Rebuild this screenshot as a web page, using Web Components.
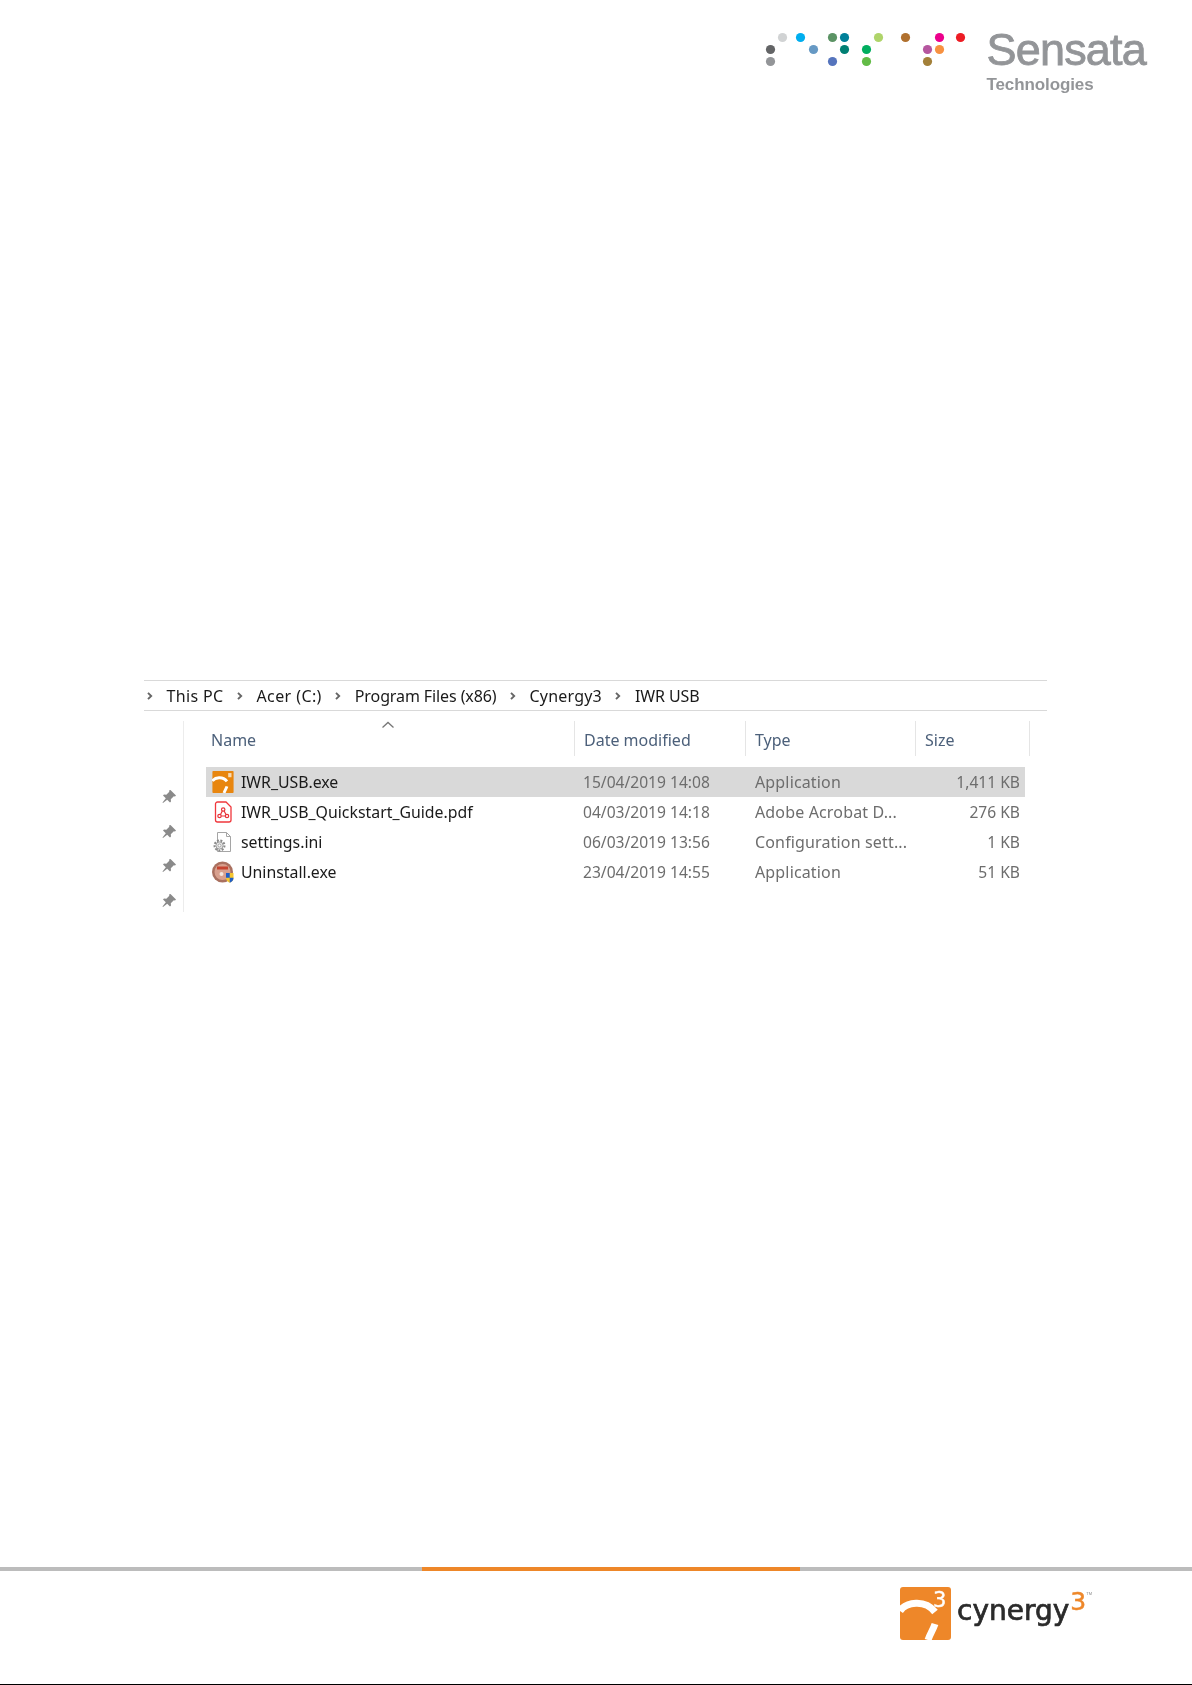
<!DOCTYPE html>
<html>
<head>
<meta charset="utf-8">
<title>IWR USB</title>
<style>
html, body { margin: 0; background: #fff; }
body { width: 1192px; height: 1685px; overflow: hidden; display: flex; flex-direction: column; }
file-window { margin-top: 570px; }
page-footer { margin-top: auto; }
</style>
</head>
<body>
<page-header></page-header>
<file-window>
  <path-bar slot="path" parts="This PC|Acer (C:)|Program Files (x86)|Cynergy3|IWR USB" tracks=".35 .4 -.1 .2 -.1"></path-bar>
  <file-row slot="rows" selected name="IWR_USB.exe" date="15/04/2019 14:08" type="Application" size="1,411 KB" icon="c3"></file-row>
  <file-row slot="rows" name="IWR_USB_Quickstart_Guide.pdf" date="04/03/2019 14:18" type="Adobe Acrobat D..." size="276 KB" icon="pdf"></file-row>
  <file-row slot="rows" name="settings.ini" date="06/03/2019 13:56" type="Configuration sett..." size="1 KB" icon="ini"></file-row>
  <file-row slot="rows" name="Uninstall.exe" date="23/04/2019 14:55" type="Application" size="51 KB" icon="setup"></file-row>
</file-window>
<page-footer></page-footer>

<script>
// sensata logo, dots are [x, y, colour] inside the svg
const DOTS = [
  [33,12,'#d1d3d4'],[51,12,'#00aeef'],[21,24,'#636466'],[21,36,'#939598'],[64,24,'#6699c4'],
  [83,12,'#5b9364'],[95,12,'#008099'],[95,24,'#007f73'],[83,36,'#5574bd'],[117,24,'#00ae5f'],
  [117,36,'#62bb46'],[129,12,'#afd46a'],[156,12,'#b0702e'],[190,12,'#ec008c'],[211,12,'#ed1c24'],
  [178,24,'#b5569f'],[190,24,'#f79140'],[178,36,'#a38039']
];

// the two white strokes of the c3 mark, in the 51x53 box of the footer logo
const C3_MARK = `<g fill="none" stroke="#fff" stroke-width="7">
  <path d="M0 24C6 15 25 12 35 25"/><path d="M35 37C33 43 30 47 28 53"/></g>`;

class PageHeader extends HTMLElement {
  constructor() {
    super();
    const circles = DOTS.map(d => `<circle cx="${d[0]}" cy="${d[1]}" r="4.6" fill="${d[2]}"/>`).join('');
    this.attachShadow({ mode: 'open' }).innerHTML = `
<style>
:host { display: flex; justify-content: flex-end; height: 110px; padding: 25px 46px 0 0; box-sizing: border-box; }
.logo { display: flex; gap: 11px; filter: blur(.4px); }
svg { width: 225px; height: 50px; display: block; }
.words { display: flex; flex-direction: column; font-family: "Liberation Sans", sans-serif; color: #939598; }
.big { font-size: 45px; line-height: 50px; letter-spacing: -.8px; -webkit-text-stroke: .8px #939598; }
.small { font-size: 17px; line-height: 20px; font-weight: bold; letter-spacing: -.1px; }
</style>
<div class="logo">
  <svg viewBox="0.5 -0.5 225 50">${circles}</svg>
  <div class="words"><span class="big">Sensata</span><span class="small">Technologies</span></div>
</div>`;
  }
}

class PathBar extends HTMLElement {
  constructor() {
    super();
    const chev = '<svg width="8" height="10" viewBox="0 0 8 10"><path d="M2 1.800 5.200 5 2 8.200" fill="none" stroke="#666" stroke-width="1.900"/></svg>';
    const tracks = this.getAttribute('tracks').split(' ');
    const items = this.getAttribute('parts').split('|')
      .map((p, i) => `${chev}<span style="letter-spacing:${tracks[i]}px">${p}</span>`).join('');
    this.attachShadow({ mode: 'open' }).innerHTML = `
<style>
:host { display: block; }
.bar { display: flex; align-items: center; height: 29px; border-top: 1px solid #d9d9d9; border-bottom: 1px solid #d9d9d9; padding-left: 2px; color: #1a1a1a; font-size: 16px; }
svg { flex: none; margin-right: 12.500px; }
span { margin-right: 12.500px; }
</style>
<div class="bar">${items}</div>`;
  }
}

const ICONS = {
  c3: `<svg viewBox="0 0 51 53"><rect width="51" height="53" rx="2" fill="#e8860f"/>${C3_MARK}<path d="M38 5h8v10h-8z" fill="#f9dcb4"/></svg>`,
  pdf: `<svg viewBox="0 0 22 22"><path d="M3.500 3a2 2 0 0 1 2-2H14l5 5v13a2 2 0 0 1-2 2H5.500a2 2 0 0 1-2-2z" fill="#fff" stroke="#f0373c" stroke-width="1.300"/><g fill="none" stroke="#e8333a" stroke-width="1.200"><circle cx="11.200" cy="8.500" r="1.700"/><circle cx="7.500" cy="15" r="1.700"/><circle cx="15" cy="15" r="1.700"/><path d="M10.300 10 8.500 13.500M12.100 10 14 13.500M9.200 15h4.100"/></g></svg>`,
  ini: `<svg viewBox="0 0 22 22"><path d="M5.500 20.500V1.500H14.500L18.500 5.500V20.500z" fill="#fff" stroke="#a5a5a5"/><path d="M14.500 1.500v4h4" fill="none" stroke="#a5a5a5"/><circle cx="7.500" cy="14.500" r="5" fill="none" stroke="#8a8a8a" stroke-width="2" stroke-dasharray="2 1.400"/><circle cx="7.500" cy="14.500" r="3.600" fill="#e8e8e8" stroke="#8a8a8a" stroke-width=".8"/><circle cx="7.500" cy="14.500" r="1.500" fill="#fff" stroke="#8a8a8a" stroke-width=".7"/></svg>`,
  setup: `<svg viewBox="0 0 22 22"><circle cx="10.500" cy="11" r="10.500" fill="#a9705f"/><circle cx="10.500" cy="11" r="8" fill="#d8a08e"/><path d="M5 5.500h11v3H5z" fill="#c6432f"/><circle cx="9.500" cy="13" r="2" fill="#f4e8e0"/><path d="M14 12h7.500v5c0 2.500-1.800 4-3.750 4.800C15.800 21 14 19.500 14 17z" fill="#f6c52e"/><path d="M14 12h3.750v4.800H14zM17.750 16.800h3.750v.2c0 2.500-1.800 4-3.750 4.800z" fill="#1f5fc7"/></svg>`
};

class FileRow extends HTMLElement {
  constructor() {
    super();
    const g = n => this.getAttribute(n);
    this.attachShadow({ mode: 'open' }).innerHTML = `
<style>
:host { display: grid; grid-template-columns: 377px 172px 135px 1fr; align-items: center; height: 30px; white-space: nowrap; }
:host([selected]) { background: #d9d9d9; }
.name { display: flex; align-items: center; color: #1a1a1a; padding-left: 6px; gap: 7px; font-size: 15.850px; }
.name svg { width: 22px; height: 22px; flex: none; }
.grey { color: #6d6d6d; }
.date { font-size: 15.600px; }
.type { letter-spacing: .15px; }
.size { text-align: right; padding-right: 5px; font-size: 15.600px; }
</style>
<div class="name">${ICONS[g('icon')]}<span>${g('name')}</span></div>
<div class="grey date">${g('date')}</div>
<div class="grey type">${g('type')}</div>
<div class="grey size">${g('size')}</div>`;
  }
}

class FileWindow extends HTMLElement {
  constructor() {
    super();
    const pin = '<svg width="16" height="16" viewBox="0 0 16 16"><path d="M9.500 1 15 6.500l-1 1-1.200-.3-3 3 .2 2.300-1 1-2.800-2.800L2 14l-.5-.5 3.300-4.200L2 6.500l1-1 2.300.2 3-3L8 1.500z" fill="#8a8a8a"/></svg>';
    this.attachShadow({ mode: 'open' }).innerHTML = `
<style>
:host { display: block; width: 903px; margin-left: 144px; height: 235px; font-family: "Noto Sans", sans-serif; font-size: 16px; filter: blur(.35px); }
.body { display: flex; margin-top: 10px; }
.pins { width: 40px; height: 191px; border-right: 1px solid #ececec; box-sizing: border-box; padding: 68px 0 0 17px; display: flex; flex-direction: column; gap: 18.500px; }
.pins svg { display: block; }
.list { margin-left: 22px; width: 824px; }
.head { display: grid; grid-template-columns: 370px 171px 170px 114px; height: 35px; margin-left: -1px; color: #4c607a; position: relative; margin-bottom: 11px; white-space: nowrap; }
.head div { height: 35px; line-height: 39px; border-right: 1px solid #e5e5e5; padding-left: 9px; box-sizing: border-box; }
.head div:first-child { padding-left: 6px; }
.sort { position: absolute; left: 176px; top: 0; }
.rows { width: 819px; }
</style>
<slot name="path"></slot>
<div class="body">
  <div class="pins">${pin}${pin}${pin}${pin}</div>
  <div class="list">
    <div class="head">
      <div>Name</div><div>Date modified</div><div>Type</div><div>Size</div>
      <svg class="sort" width="14" height="8" viewBox="0 0 14 8"><path d="M1.500 6.500 7 1.500l5.500 5" fill="none" stroke="#777" stroke-width="1.300"/></svg>
    </div>
    <div class="rows"><slot name="rows"></slot></div>
  </div>
</div>`;
  }
}

class PageFooter extends HTMLElement {
  constructor() {
    super();
    this.attachShadow({ mode: 'open' }).innerHTML = `
<style>
:host { display: block; height: 118px; box-sizing: border-box; border-bottom: 1px solid #000; }
.rule { display: flex; height: 4px; background: #bcbcbc; padding-left: 422px; }
.rule i { display: block; width: 378px; background: #ee8729; }
.brand { display: flex; align-items: flex-start; margin: 16px 0 0 900px; filter: blur(.3px); font-family: "DejaVu Sans", sans-serif; }
svg { width: 51px; height: 53px; flex: none; }
.word { font-size: 28px; line-height: 34px; color: #2b2b2b; margin: 7px 0 0 6px; -webkit-text-stroke: .7px #2b2b2b; }
.three { font-size: 25px; line-height: 28px; color: #ee8729; margin: 1px 0 0 1px; -webkit-text-stroke: .5px #ee8729; }
.tm { font-family: "Liberation Sans", sans-serif; font-size: 4px; line-height: 6px; color: #888; margin-top: 4px; }
</style>
<div class="rule"><i></i></div>
<div class="brand">
  <svg viewBox="0 0 51 53">
    <rect width="51" height="53" rx="3" fill="#ee8729"/>
    ${C3_MARK}
    <text x="33" y="20" font-size="21" fill="#fff" stroke="#fff" stroke-width=".4">3</text>
  </svg>
  <span class="word">cynergy</span><span class="three">3</span><span class="tm">TM</span>
</div>`;
  }
}

customElements.define('page-header', PageHeader);
customElements.define('path-bar', PathBar);
customElements.define('file-row', FileRow);
customElements.define('file-window', FileWindow);
customElements.define('page-footer', PageFooter);
</script>
</body>
</html>
